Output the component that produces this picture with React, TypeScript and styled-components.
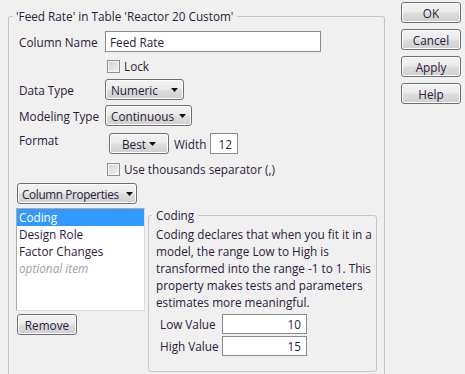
import React from 'react';
import styled, { createGlobalStyle } from 'styled-components';

const ink = '#2e1a3e';

const GlobalStyle = createGlobalStyle`
  html, body {
    margin: 0;
    padding: 0;
    background: #f0f0f0;
    overflow: hidden;
  }
  body {
    font-family: 'Open Sans', 'Noto Sans', sans-serif;
    font-size: 11.75px;
    color: ${ink};
  }
`;

const Frame = styled.div`
  display: flex;
  align-items: flex-start;
  gap: 16px;
  padding-left: 8px;
  width: 465px;
  height: 374px;
  box-sizing: border-box;
`;

const GroupBox = styled.fieldset<{ $w: number }>`
  width: ${({ $w }) => $w}px;
  box-sizing: border-box;
  margin: 0;
  padding: 0 7px;
  border: 1px solid #c4c4c4;
  border-radius: 3px;
  min-inline-size: 0;
`;

const MainBox = styled(GroupBox)`
  margin-top: 9px;
  height: 365px;
  border-bottom: none;
  border-radius: 3px 3px 0 0;
`;

const Legend = styled.legend`
  padding: 0 4px 0 3px;
  margin-left: -3px;
  line-height: 14px;
  height: 14px;
  white-space: nowrap;
`;

const Row = styled.div<{ $mt?: number }>`
  display: flex;
  align-items: center;
  line-height: 14px;
  margin-top: ${({ $mt }) => $mt ?? 0}px;
`;

const TopRow = styled(Row)`
  align-items: flex-start;
`;

const Label = styled.span<{ $w?: number; $ml?: number }>`
  width: ${({ $w }) => $w ?? 86}px;
  margin-left: ${({ $ml }) => $ml ?? 3}px;
  flex-shrink: 0;
  white-space: nowrap;
  line-height: 14px;
`;

const TextField = styled.div<{ $w: number; $h?: number; $right?: boolean }>`
  width: ${({ $w }) => $w}px;
  height: ${({ $h }) => $h ?? 20}px;
  box-sizing: border-box;
  background: #fff;
  border: 1px solid #8c8c8c;
  display: flex;
  align-items: center;
  justify-content: ${({ $right }) => ($right ? 'flex-end' : 'flex-start')};
  padding: 0 5px 0 4px;
  white-space: nowrap;
`;

const Check = styled.span`
  width: 13px;
  height: 13px;
  box-sizing: border-box;
  border: 1px solid #8e8f8f;
  background: linear-gradient(135deg, #d2d2d2 0%, #f4f4f4 100%);
  box-shadow: inset 0 0 0 1px #f4f4f4;
  margin-left: 2px;
  margin-right: 4px;
  flex-shrink: 0;
`;

const Indent = styled.div`
  display: flex;
  align-items: center;
  height: 13px;
  line-height: 13px;
  margin-left: 89px;
  white-space: nowrap;
`;

const PushButton = styled.div<{ $w?: number; $ml?: number }>`
  width: ${({ $w }) => $w ?? 60}px;
  height: 21px;
  margin-left: ${({ $ml }) => $ml ?? 0}px;
  box-sizing: border-box;
  border: 1px solid #707070;
  border-radius: 3px;
  background: linear-gradient(#f3f3f3 0%, #ebebeb 48%, #dddddd 52%, #cfcfcf 100%);
  box-shadow: inset 0 0 0 1px #fcfcfc;
  display: flex;
  align-items: center;
  justify-content: center;
  white-space: nowrap;
  flex-shrink: 0;
`;

const Dropdown = styled(PushButton)<{ $pl: number; $pr: number; $tight?: boolean }>`
  justify-content: flex-start;
  padding: 0 ${({ $pr }) => $pr}px 0 ${({ $pl }) => $pl}px;
  letter-spacing: ${({ $tight }) => ($tight ? '-0.35px' : 'normal')};
  & > svg {
    margin-left: auto;
    flex-shrink: 0;
  }
`;

const ButtonColumn = styled.div`
  display: flex;
  flex-direction: column;
  gap: 6px;
  margin-top: 2px;
`;

const Lower = styled.div`
  display: flex;
  align-items: flex-start;
  gap: 3px;
  margin-top: 4px;
`;

const LeftColumn = styled.div`
  width: 129px;
  display: flex;
  flex-direction: column;
  gap: 3px;
`;

const ListBox = styled.div`
  height: 103px;
  box-sizing: border-box;
  background: #fff;
  border: 1px solid #a9a9a9;
  border-right-color: #dcdcdc;
  border-bottom-color: #dcdcdc;
`;

const ListItem = styled.div<{ $selected?: boolean; $hint?: boolean }>`
  height: 17px;
  line-height: 17px;
  padding-left: 2px;
  white-space: nowrap;
  background: ${({ $selected }) => ($selected ? '#3399ff' : 'transparent')};
  color: ${({ $selected, $hint }) => ($selected ? '#fff' : $hint ? '#a0a0a8' : ink)};
  font-style: ${({ $hint }) => ($hint ? 'italic' : 'normal')};
`;

const CodingBox = styled(GroupBox)`
  padding: 4px 7px 15px;
`;

const CodingLegend = styled(Legend)`
  padding: 0 4px 0 4px;
  margin-left: -4px;
`;

const Description = styled.p`
  margin: 0;
  line-height: 17px;
  white-space: nowrap;
`;

const ValueRow = styled.div<{ $mt: number }>`
  display: flex;
  align-items: center;
  margin-top: ${({ $mt }) => $mt}px;
  padding-left: 1px;
`;

const Arrow = () => (
  <svg width="7" height="4" viewBox="0 0 7 4">
    <path d="M0 0 H7 L3.5 4 Z" fill="#111" />
  </svg>
);

const App: React.FC = () => {
  return (
    <>
      <GlobalStyle />
      <Frame>
        <MainBox $w={377}>
          <Legend>'Feed Rate' in Table 'Reactor 20 Custom'</Legend>

          <Row $mt={8}>
            <Label>Column Name</Label>
            <TextField $w={216} $h={21}>Feed Rate</TextField>
          </Row>

          <Row $mt={8}>
            <Indent>
              <Check />
              Lock
            </Indent>
          </Row>

          <Row $mt={6}>
            <Label>Data Type</Label>
            <Dropdown $w={79} $pl={5} $pr={5}>
              Numeric
              <Arrow />
            </Dropdown>
          </Row>

          <Row $mt={5}>
            <Label>Modeling Type</Label>
            <Dropdown $w={87} $pl={5} $pr={5}>
              Continuous
              <Arrow />
            </Dropdown>
          </Row>

          <TopRow $mt={7}>
            <Label>Format</Label>
            <Row>
              <Dropdown $w={60} $pl={12} $pr={12} $ml={4}>
                Best
                <Arrow />
              </Dropdown>
              <Label $w={36} $ml={5}>Width</Label>
              <TextField $w={28} $h={21} $right>12</TextField>
            </Row>
          </TopRow>

          <Row $mt={9}>
            <Indent>
              <Check />
              Use thousands separator (,)
            </Indent>
          </Row>

          <Row $mt={7}>
            <Dropdown $w={120} $pl={4} $pr={3} $ml={1} $tight>
              Column Properties
              <Arrow />
            </Dropdown>
          </Row>

          <Lower>
            <LeftColumn>
              <ListBox>
                <ListItem $selected>Coding</ListItem>
                <ListItem>Design Role</ListItem>
                <ListItem>Factor Changes</ListItem>
                <ListItem $hint>optional item</ListItem>
              </ListBox>
              <PushButton $ml={1}>Remove</PushButton>
            </LeftColumn>

            <CodingBox $w={229}>
              <CodingLegend>Coding</CodingLegend>
              <Description>
                Coding declares that when you fit it in a
                <br />
                model, the range Low to High is
                <br />
                transformed into the range -1 to 1. This
                <br />
                property makes tests and parameters
                <br />
                estimates more meaningful.
              </Description>
              <ValueRow $mt={3}>
                <Label $w={62}>Low Value</Label>
                <TextField $w={85} $right>10</TextField>
              </ValueRow>
              <ValueRow $mt={2}>
                <Label $w={62}>High Value</Label>
                <TextField $w={85} $right>15</TextField>
              </ValueRow>
            </CodingBox>
          </Lower>
        </MainBox>

        <ButtonColumn>
          <PushButton>OK</PushButton>
          <PushButton>Cancel</PushButton>
          <PushButton>Apply</PushButton>
          <PushButton>Help</PushButton>
        </ButtonColumn>
      </Frame>
    </>
  );
};

export default App;
